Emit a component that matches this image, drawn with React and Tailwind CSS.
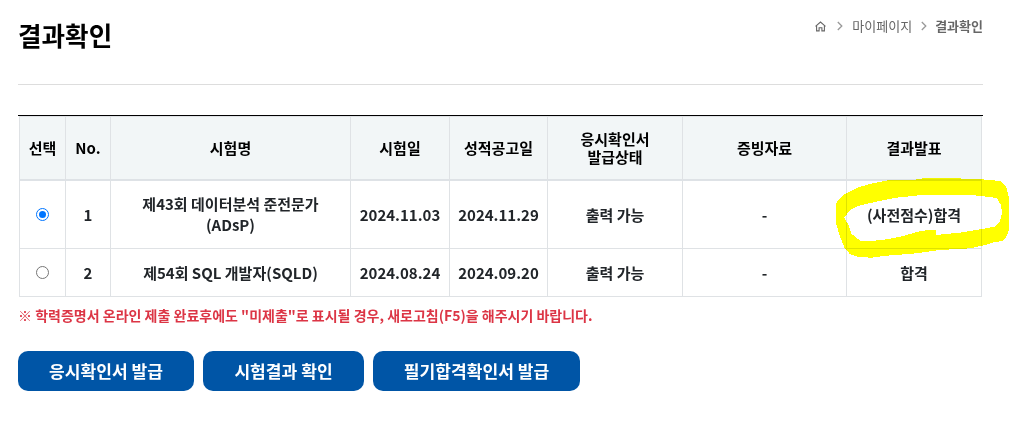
import React from "react";

const columns = [
  { label: "선택", width: "w-[46px]" },
  { label: "No.", width: "w-[45px]" },
  { label: "시험명", width: "w-[240px]" },
  { label: "시험일", width: "w-[99px]" },
  { label: "성적공고일", width: "w-[98px]" },
  { label: "응시확인서\n발급상태", width: "w-[135px]" },
  { label: "증빙자료", width: "w-[164px]" },
  { label: "결과발표", width: "w-[136px]" },
];

const rows = [
  {
    no: 1,
    name: "제43회 데이터분석 준전문가\n(ADsP)",
    examDate: "2024.11.03",
    noticeDate: "2024.11.29",
    status: "출력 가능",
    proof: "-",
    result: "(사전점수)합격",
    height: "h-[68px]",
  },
  {
    no: 2,
    name: "제54회 SQL 개발자(SQLD)",
    examDate: "2024.08.24",
    noticeDate: "2024.09.20",
    status: "출력 가능",
    proof: "-",
    result: "합격",
    height: "h-12",
  },
];

const buttons = [
  { label: "응시확인서 발급", width: "w-44" },
  { label: "시험결과 확인", width: "w-[161px]" },
  { label: "필기합격확인서 발급", width: "w-[207px]" },
];

const HomeIcon = () => (
  <svg className="w-[11px] h-[11px]" viewBox="0 0 11 11" fill="none" stroke="#666" strokeWidth="1.1">
    <path d="M0.5 5.3 5.5 1l5 4.3M1.6 4.6v5.3h2.5V6.8h2.8v3.1h2.5V4.6" />
  </svg>
);

const Chevron = () => (
  <svg className="w-[6px] h-[10px]" viewBox="0 0 6 10" fill="none" stroke="#999" strokeWidth="1.3">
    <path d="M0.8 1 4.8 5l-4 4" />
  </svg>
);

const Radio = ({ checked }) => (
  <span
    className={`flex items-center justify-center w-[13px] h-[13px] mx-auto rounded-full border bg-white ${
      checked ? "border-[#0075ff]" : "border-[#767676]"
    }`}
  >
    {checked && <span className="w-[7px] h-[7px] rounded-full bg-[#0075ff]" />}
  </span>
);

const Breadcrumb = () => (
  <nav className="flex items-center h-5 mt-4 text-[13px] text-[#666]">
    <HomeIcon />
    <span className="ml-[11px]">
      <Chevron />
    </span>
    <span className="ml-[9px]">마이페이지</span>
    <span className="ml-[9px]">
      <Chevron />
    </span>
    <span className="ml-2 font-bold">결과확인</span>
  </nav>
);

// Marker stroke drawn around the first result
const Highlight = () => (
  <svg
    className="absolute left-[800px] top-[110px] w-[219px] h-[190px] mix-blend-multiply pointer-events-none"
    viewBox="0 0 657 570"
    shapeRendering="crispEdges"
  >
    <path
      fill="#ffff00"
      fillRule="evenodd"
      d="M108 285 112 272 135 252 175 232 210 222 265 211 365 208 366 204H484V208L545 208 603 213 618 230 627 262V360L617 385 607 393 580 397 555 405 510 415 420 420 350 430 260 437 215 443 175 441 150 433 133 412 120 380 108 340ZM133 323 145 345 155 372 180 392 215 393 260 388 310 378 365 362 407 360 408 375 480 368 540 358 585 350 600 335 606 308 603 285 590 264 545 258 500 254 365 255 290 263 230 275 180 286 150 300Z"
    />
  </svg>
);

const App = () => {
  const cell = "p-0 border-l border-b border-[#dfe2e5] last:border-r whitespace-pre-line align-middle";

  return (
    <main className="relative w-[1019px] h-[426px] overflow-hidden bg-white pl-[18px] pr-9 font-['Noto_Sans_CJK_KR','Noto_Sans',sans-serif]">
      {/* Page title */}
      <header className="flex items-start justify-between h-[85px] border-b border-[#ddd]">
        <h1 className="mt-4 text-[25.6px] leading-[38px] font-bold text-black">결과확인</h1>
        <Breadcrumb />
      </header>

      {/* Result table */}
      <div className="mt-[30px] pl-px border-t border-black">
        <table className="w-[963px] table-fixed border-separate border-spacing-0 text-center text-[15px] font-bold text-[#212529]">
          <thead>
            <tr className="h-[65px] bg-[#f2f6f7] text-black leading-[18px]">
              {columns.map((col) => (
                <th
                  key={col.label}
                  className={`${col.width} p-0 border-t border-l border-b-2 border-[#dfe2e5] border-b-[#dee2e6] last:border-r font-bold whitespace-pre-line`}
                >
                  {col.label}
                </th>
              ))}
            </tr>
          </thead>
          <tbody className="leading-[21px]">
            {rows.map((row) => (
              <tr key={row.no} className={row.height}>
                <td className={cell}>
                  <Radio checked={row.no === 1} />
                </td>
                <td className={cell}>{row.no}</td>
                <td className={`${cell} pb-px`}>{row.name}</td>
                <td className={cell}>{row.examDate}</td>
                <td className={cell}>{row.noticeDate}</td>
                <td className={cell}>{row.status}</td>
                <td className={cell}>{row.proof}</td>
                <td className={cell}>{row.result}</td>
              </tr>
            ))}
          </tbody>
        </table>
      </div>

      <p className="mt-2 text-[14px] leading-[21px] font-bold text-[#dc3545]">
        <span className="font-medium">※</span> 학력증명서 온라인 제출 완료후에도 "미제출"로 표시될 경우, 새로고침(F5)을 해주시기 바랍니다.
      </p>

      {/* Actions */}
      <div className="flex gap-[9px] mt-[25px]">
        {buttons.map((btn) => (
          <button
            key={btn.label}
            className={`${btn.width} h-10 rounded-[10px] bg-[#0055a6] text-[17.1px] font-bold text-white`}
          >
            {btn.label}
          </button>
        ))}
      </div>

      <Highlight />
    </main>
  );
};

export default App;
